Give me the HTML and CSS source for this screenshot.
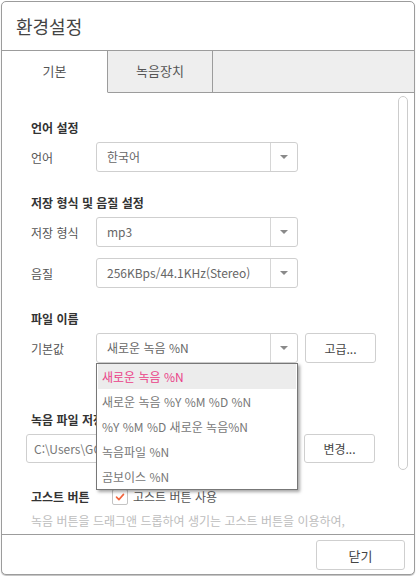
FILE: index.html
```html
<!DOCTYPE html>
<html lang="ko">
<head>
<meta charset="utf-8">
<title>환경설정</title>
<link rel="stylesheet" href="styles.css">
</head>
<body>
<div class="window">
  <div class="titlebar">환경설정</div>
  <div class="tabs">
    <div class="tab active">기본</div>
    <div class="tab">녹음장치</div>
    <div class="tab-rest"></div>
  </div>
  <div class="content">
    <div class="section first">
      <div class="heading">언어 설정</div>
      <div class="row">
        <div class="label">언어</div>
        <div class="select"><span class="value">한국어</span><span class="arrow"></span></div>
      </div>
    </div>
    <div class="section">
      <div class="heading">저장 형식 및 음질 설정</div>
      <div class="row">
        <div class="label">저장 형식</div>
        <div class="select"><span class="value">mp3</span><span class="arrow"></span></div>
      </div>
      <div class="row second">
        <div class="label">음질</div>
        <div class="select"><span class="value">256KBps/44.1KHz(Stereo)</span><span class="arrow"></span></div>
      </div>
    </div>
    <div class="section">
      <div class="heading">파일 이름</div>
      <div class="row">
        <div class="label">기본값</div>
        <div class="select open">
          <span class="value">새로운 녹음 %N</span><span class="arrow"></span>
          <ul class="dropdown">
            <li class="selected">새로운 녹음 %N</li>
            <li>새로운 녹음 %Y %M %D %N</li>
            <li>%Y %M %D 새로운 녹음%N</li>
            <li>녹음파일 %N</li>
            <li>곰보이스 %N</li>
          </ul>
        </div>
        <button class="btn side">고급...</button>
      </div>
    </div>
    <div class="section path-section">
      <div class="heading">녹음 파일 저장 위치</div>
      <div class="row path-row">
        <div class="input">C:\Users\GOM\Documents\곰녹음기</div>
        <button class="btn side">변경...</button>
      </div>
    </div>
    <div class="ghost-row">
      <div class="heading inline">고스트 버튼</div>
      <span class="checkbox"><svg viewBox="0 0 16 16" width="16" height="16"><path d="M4 8.2 L6.8 11 L12 5" fill="none" stroke="#f2643c" stroke-width="1.8" stroke-linecap="round" stroke-linejoin="round"/></svg></span>
      <span class="check-label">고스트 버튼 사용</span>
    </div>
    <div class="desc">녹음 버튼을 드래그앤 드롭하여 생기는 고스트 버튼을 이용하여,</div>
    <div class="scroll-thumb"></div>
  </div>
  <div class="footer">
    <button class="btn close">닫기</button>
  </div>
</div>
</body>
</html>
```

FILE: styles.css
```css
* { box-sizing: border-box; }
html, body { margin: 0; padding: 0; background: #ffffff; }
body {
  font-family: "Noto Sans CJK KR", "Noto Sans", sans-serif;
  font-size: 12px;
  color: #555;
}
.window {
  margin: 1px;
  width: 414px;
  height: 574px;
  border: 1px solid #9c9c9c;
  border-radius: 5px;
  box-shadow: 0 1px 1px rgba(0,0,0,0.25);
  display: flex;
  flex-direction: column;
  overflow: hidden;
  background: #fff;
}
.titlebar {
  height: 49px;
  flex: none;
  border-bottom: 1px solid #9c9c9c;
  padding-left: 14px;
  font-size: 18px;
  line-height: 48px;
  color: #444;
}
.tabs {
  height: 42px;
  flex: none;
  display: flex;
}
.tab {
  width: 105px;
  border-right: 1px solid #9c9c9c;
  border-bottom: 1px solid #9c9c9c;
  background: #eeeeee;
  display: flex;
  align-items: center;
  justify-content: center;
  font-size: 13px;
  color: #555;
  padding-bottom: 2px;
}
.tab.active {
  width: 106px;
  background: #fff;
  border-bottom-color: #fff;
}
.tab-rest {
  flex: 1;
  background: #eeeeee;
  border-bottom: 1px solid #9c9c9c;
}
.content {
  flex: 1;
  position: relative;
  overflow: hidden;
  padding: 25px 0 0 29px;
}
.section { margin-top: 21px; }
.section.first { margin-top: 0; }
.section.path-section { margin-top: 47px; }
.heading {
  font-weight: bold;
  color: #333;
  line-height: 20px;
  height: 20px;
  margin-bottom: 4px;
}
.heading.inline { margin: 0; width: 81px; line-height: 16px; height: 16px; }
.row {
  display: flex;
  align-items: center;
  height: 30px;
}
.row.second { margin-top: 11px; }
.label {
  width: 65px;
  color: #555;
}
.select {
  position: relative;
  width: 202px;
  height: 30px;
  border: 1px solid #cfcfcf;
  border-radius: 3px;
  display: flex;
  align-items: stretch;
  background: #fff;
}
.select .value {
  flex: 1;
  padding-left: 10px;
  line-height: 28px;
  color: #666;
  white-space: nowrap;
}
.select .arrow {
  width: 27px;
  border-left: 1px solid #d6d6d6;
  display: flex;
  align-items: center;
  justify-content: center;
}
.select .arrow::after {
  content: "";
  border-left: 4px solid transparent;
  border-right: 4px solid transparent;
  border-top: 4px solid #8a8a8a;
}
.dropdown {
  position: absolute;
  top: 29px;
  left: -1px;
  width: 202px;
  margin: 0;
  padding: 0 1px;
  list-style: none;
  background: #fff;
  border: 1px solid #777;
  box-shadow: 2px 2px 3px rgba(0,0,0,0.35);
  z-index: 5;
}
.dropdown li {
  height: 25px;
  line-height: 25px;
  padding-left: 4px;
  color: #777;
  white-space: nowrap;
  font-size: 12px;
}
.dropdown li.selected {
  background: #ececec;
  color: #ea3f88;
}
.btn {
  font-family: inherit;
  font-size: 12px;
  color: #444;
  background: #fff;
  border: 1px solid #cfcfcf;
  border-radius: 3px;
  padding: 0;
}
.btn.side {
  width: 71px;
  height: 30px;
  margin-left: 7px;
}
.path-row {
  margin-left: -5px;
  height: 29px;
}
.path-row .btn.side { height: 29px; margin-left: 7px; }
.input {
  width: 271px;
  height: 29px;
  border: 1px solid #cfcfcf;
  border-radius: 3px;
  padding-left: 7px;
  line-height: 27px;
  color: #777;
  white-space: nowrap;
  overflow: hidden;
}
.ghost-row {
  margin-top: 26px;
  display: flex;
  align-items: center;
  height: 16px;
}
.checkbox {
  width: 16px;
  height: 16px;
  border: 1px solid #c4c4c4;
  border-radius: 2px;
  display: flex;
  align-items: center;
  justify-content: center;
}
.checkbox svg { display: block; }
.check-label {
  margin-left: 5px;
  color: #555;
  line-height: 16px;
}
.desc {
  margin-top: 6px;
  line-height: 20px;
  color: #bdbdbd;
  white-space: nowrap;
}
.scroll-thumb {
  position: absolute;
  top: 3px;
  right: 6px;
  width: 10px;
  height: 374px;
  border: 1px solid #cccccc;
  border-radius: 5px;
  background: #fff;
}
.footer {
  height: 40px;
  flex: none;
  border-top: 1px solid #9c9c9c;
  display: flex;
  justify-content: flex-end;
  align-items: flex-start;
  padding: 5px 9px 0 0;
}
.btn.close {
  width: 89px;
  height: 30px;
  font-size: 13px;
}
```
